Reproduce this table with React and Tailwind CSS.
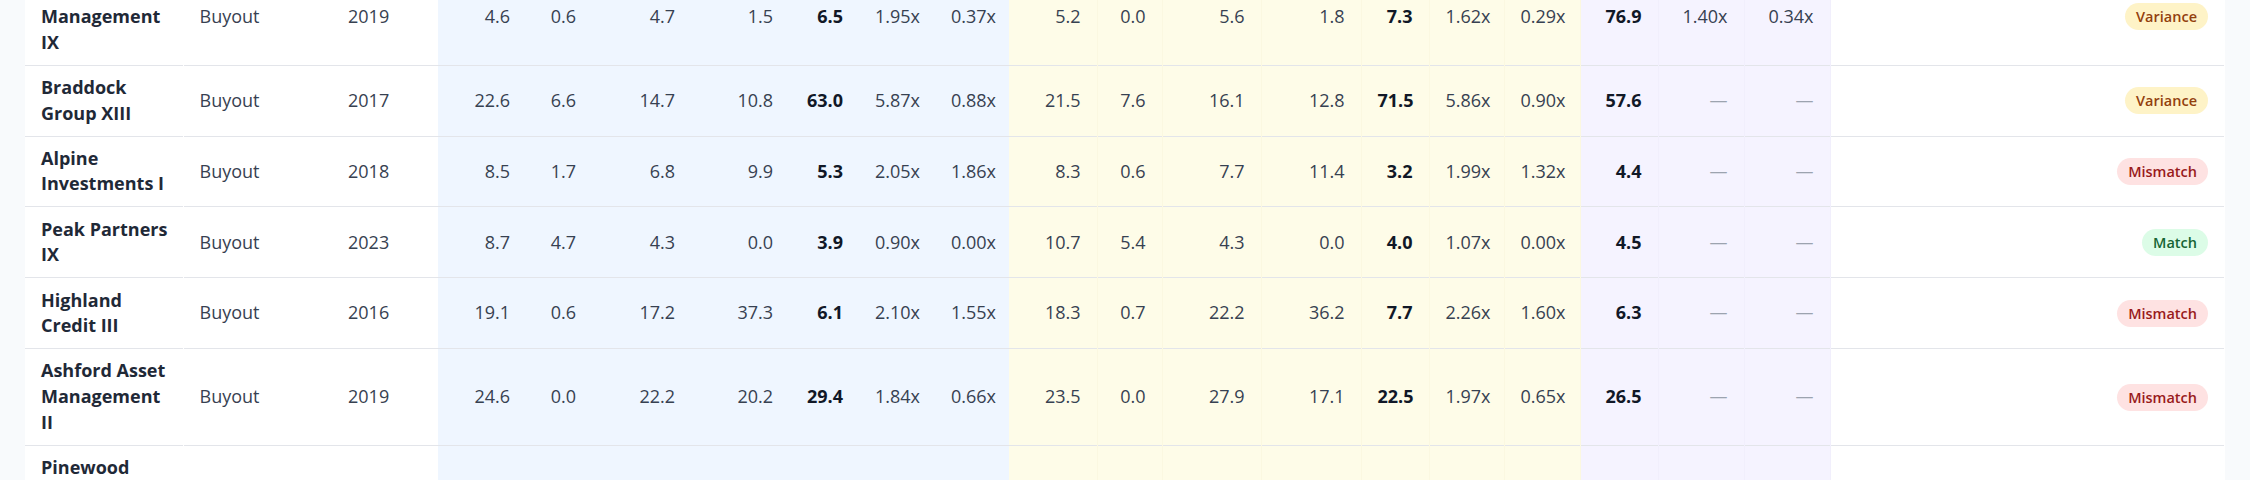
import React from 'react';

const rows = [
  {
    name: 'Cedar Asset Management IX',
    type: 'Buyout',
    year: 2019,
    reported: ['4.6', '0.6', '4.7', '1.5', '6.5', '1.95x', '0.37x'],
    computed: ['5.2', '0.0', '5.6', '1.8', '7.3', '1.62x', '0.29x'],
    benchmark: ['76.9', '1.40x', '0.34x'],
    status: 'Variance',
  },
  {
    name: 'Braddock Group XIII',
    type: 'Buyout',
    year: 2017,
    reported: ['22.6', '6.6', '14.7', '10.8', '63.0', '5.87x', '0.88x'],
    computed: ['21.5', '7.6', '16.1', '12.8', '71.5', '5.86x', '0.90x'],
    benchmark: ['57.6', null, null],
    status: 'Variance',
  },
  {
    name: 'Alpine Investments I',
    type: 'Buyout',
    year: 2018,
    reported: ['8.5', '1.7', '6.8', '9.9', '5.3', '2.05x', '1.86x'],
    computed: ['8.3', '0.6', '7.7', '11.4', '3.2', '1.99x', '1.32x'],
    benchmark: ['4.4', null, null],
    status: 'Mismatch',
  },
  {
    name: 'Peak Partners IX',
    type: 'Buyout',
    year: 2023,
    reported: ['8.7', '4.7', '4.3', '0.0', '3.9', '0.90x', '0.00x'],
    computed: ['10.7', '5.4', '4.3', '0.0', '4.0', '1.07x', '0.00x'],
    benchmark: ['4.5', null, null],
    status: 'Match',
  },
  {
    name: 'Highland Credit III',
    type: 'Buyout',
    year: 2016,
    reported: ['19.1', '0.6', '17.2', '37.3', '6.1', '2.10x', '1.55x'],
    computed: ['18.3', '0.7', '22.2', '36.2', '7.7', '2.26x', '1.60x'],
    benchmark: ['6.3', null, null],
    status: 'Mismatch',
  },
  {
    name: 'Ashford Asset Management II',
    type: 'Buyout',
    year: 2019,
    reported: ['24.6', '0.0', '22.2', '20.2', '29.4', '1.84x', '0.66x'],
    computed: ['23.5', '0.0', '27.9', '17.1', '22.5', '1.97x', '0.65x'],
    benchmark: ['26.5', null, null],
    status: 'Mismatch',
  },
  {
    name: 'Pinewood Capital Partners III',
    type: 'Buyout',
    year: 2021,
    reported: ['12.4', '2.1', '10.9', '6.2', '14.8', '1.72x', '0.51x'],
    computed: ['12.9', '2.3', '11.4', '6.0', '16.2', '1.78x', '0.47x'],
    benchmark: ['15.1', null, null],
    status: 'Variance',
  },
];

const statusStyles = {
  Variance: 'bg-[#fef3c7] text-[#92400e]',
  Mismatch: 'bg-[#fee2e2] text-[#991b1b]',
  Match: 'bg-[#dcfce7] text-[#166534]',
};

const groupWidths = {
  reported: [88, 66, 99, 98, 70, 76, 74],
  computed: [88, 65, 99, 100, 68, 75, 76],
  benchmark: [78, 86, 86],
};

const StatusBadge = ({ status }) => (
  <span
    className={`inline-block rounded-full px-[11px] py-[2px] text-[14.5px] leading-[23px] font-semibold ${statusStyles[status]}`}
  >
    {status}
  </span>
);

const Dash = () => <span className="text-[#9ca3af]">—</span>;

const App = () => {
  return (
    <div className="h-[480px] overflow-hidden bg-[#f8fafc] px-[25px] font-['Segoe_UI','Open_Sans',sans-serif] text-[18px] leading-[25.7px] text-[#374151]">
      <div className="-mt-[31px] bg-white">
        <table className="w-[2199px] table-fixed border-collapse">
          <colgroup>
            <col className="w-[158px]" />
            <col className="w-[149px]" />
            <col className="w-[106px]" />
            {groupWidths.reported.map((w, i) => (
              <col key={`r${i}`} style={{ width: w }} />
            ))}
            {groupWidths.computed.map((w, i) => (
              <col key={`c${i}`} style={{ width: w }} />
            ))}
            {groupWidths.benchmark.map((w, i) => (
              <col key={`b${i}`} style={{ width: w }} />
            ))}
            <col className="w-[394px]" />
          </colgroup>
          <tbody>
            {rows.map((row) => (
              <tr key={row.name} className="border-b border-[#e3e5ea]">
                <td className="py-[9.25px] pl-[16px] pr-[10px] align-middle font-bold text-[#1f2937] border-r border-white">
                  {row.name}
                </td>
                <td className="py-[9.25px] px-[16px] align-middle">{row.type}</td>
                <td className="py-[9.25px] px-[16px] align-middle">{row.year}</td>
                {row.reported.map((v, i) => (
                  <td
                    key={`r${i}`}
                    className={`bg-[#eff6ff] py-[9.25px] px-[16px] text-right align-middle ${
                      i === 4 ? 'font-bold text-[#111827]' : ''
                    }`}
                  >
                    {v}
                  </td>
                ))}
                {row.computed.map((v, i) => (
                  <td
                    key={`c${i}`}
                    className={`bg-[#fefce8] py-[9.25px] px-[16px] text-right align-middle border-r border-[#fbf8e1] ${
                      i === 4 ? 'font-bold text-[#111827]' : ''
                    }`}
                  >
                    {v}
                  </td>
                ))}
                {row.benchmark.map((v, i) => (
                  <td
                    key={`b${i}`}
                    className={`bg-[#f5f3ff] py-[9.25px] px-[16px] text-right align-middle border-r border-[#f1effc] ${
                      i === 0 ? 'font-bold text-[#111827]' : ''
                    }`}
                  >
                    {v === null ? <Dash /> : v}
                  </td>
                ))}
                <td className="py-[9.25px] px-[16px] text-right align-middle">
                  <StatusBadge status={row.status} />
                </td>
              </tr>
            ))}
          </tbody>
        </table>
      </div>
    </div>
  );
};

export default App;
